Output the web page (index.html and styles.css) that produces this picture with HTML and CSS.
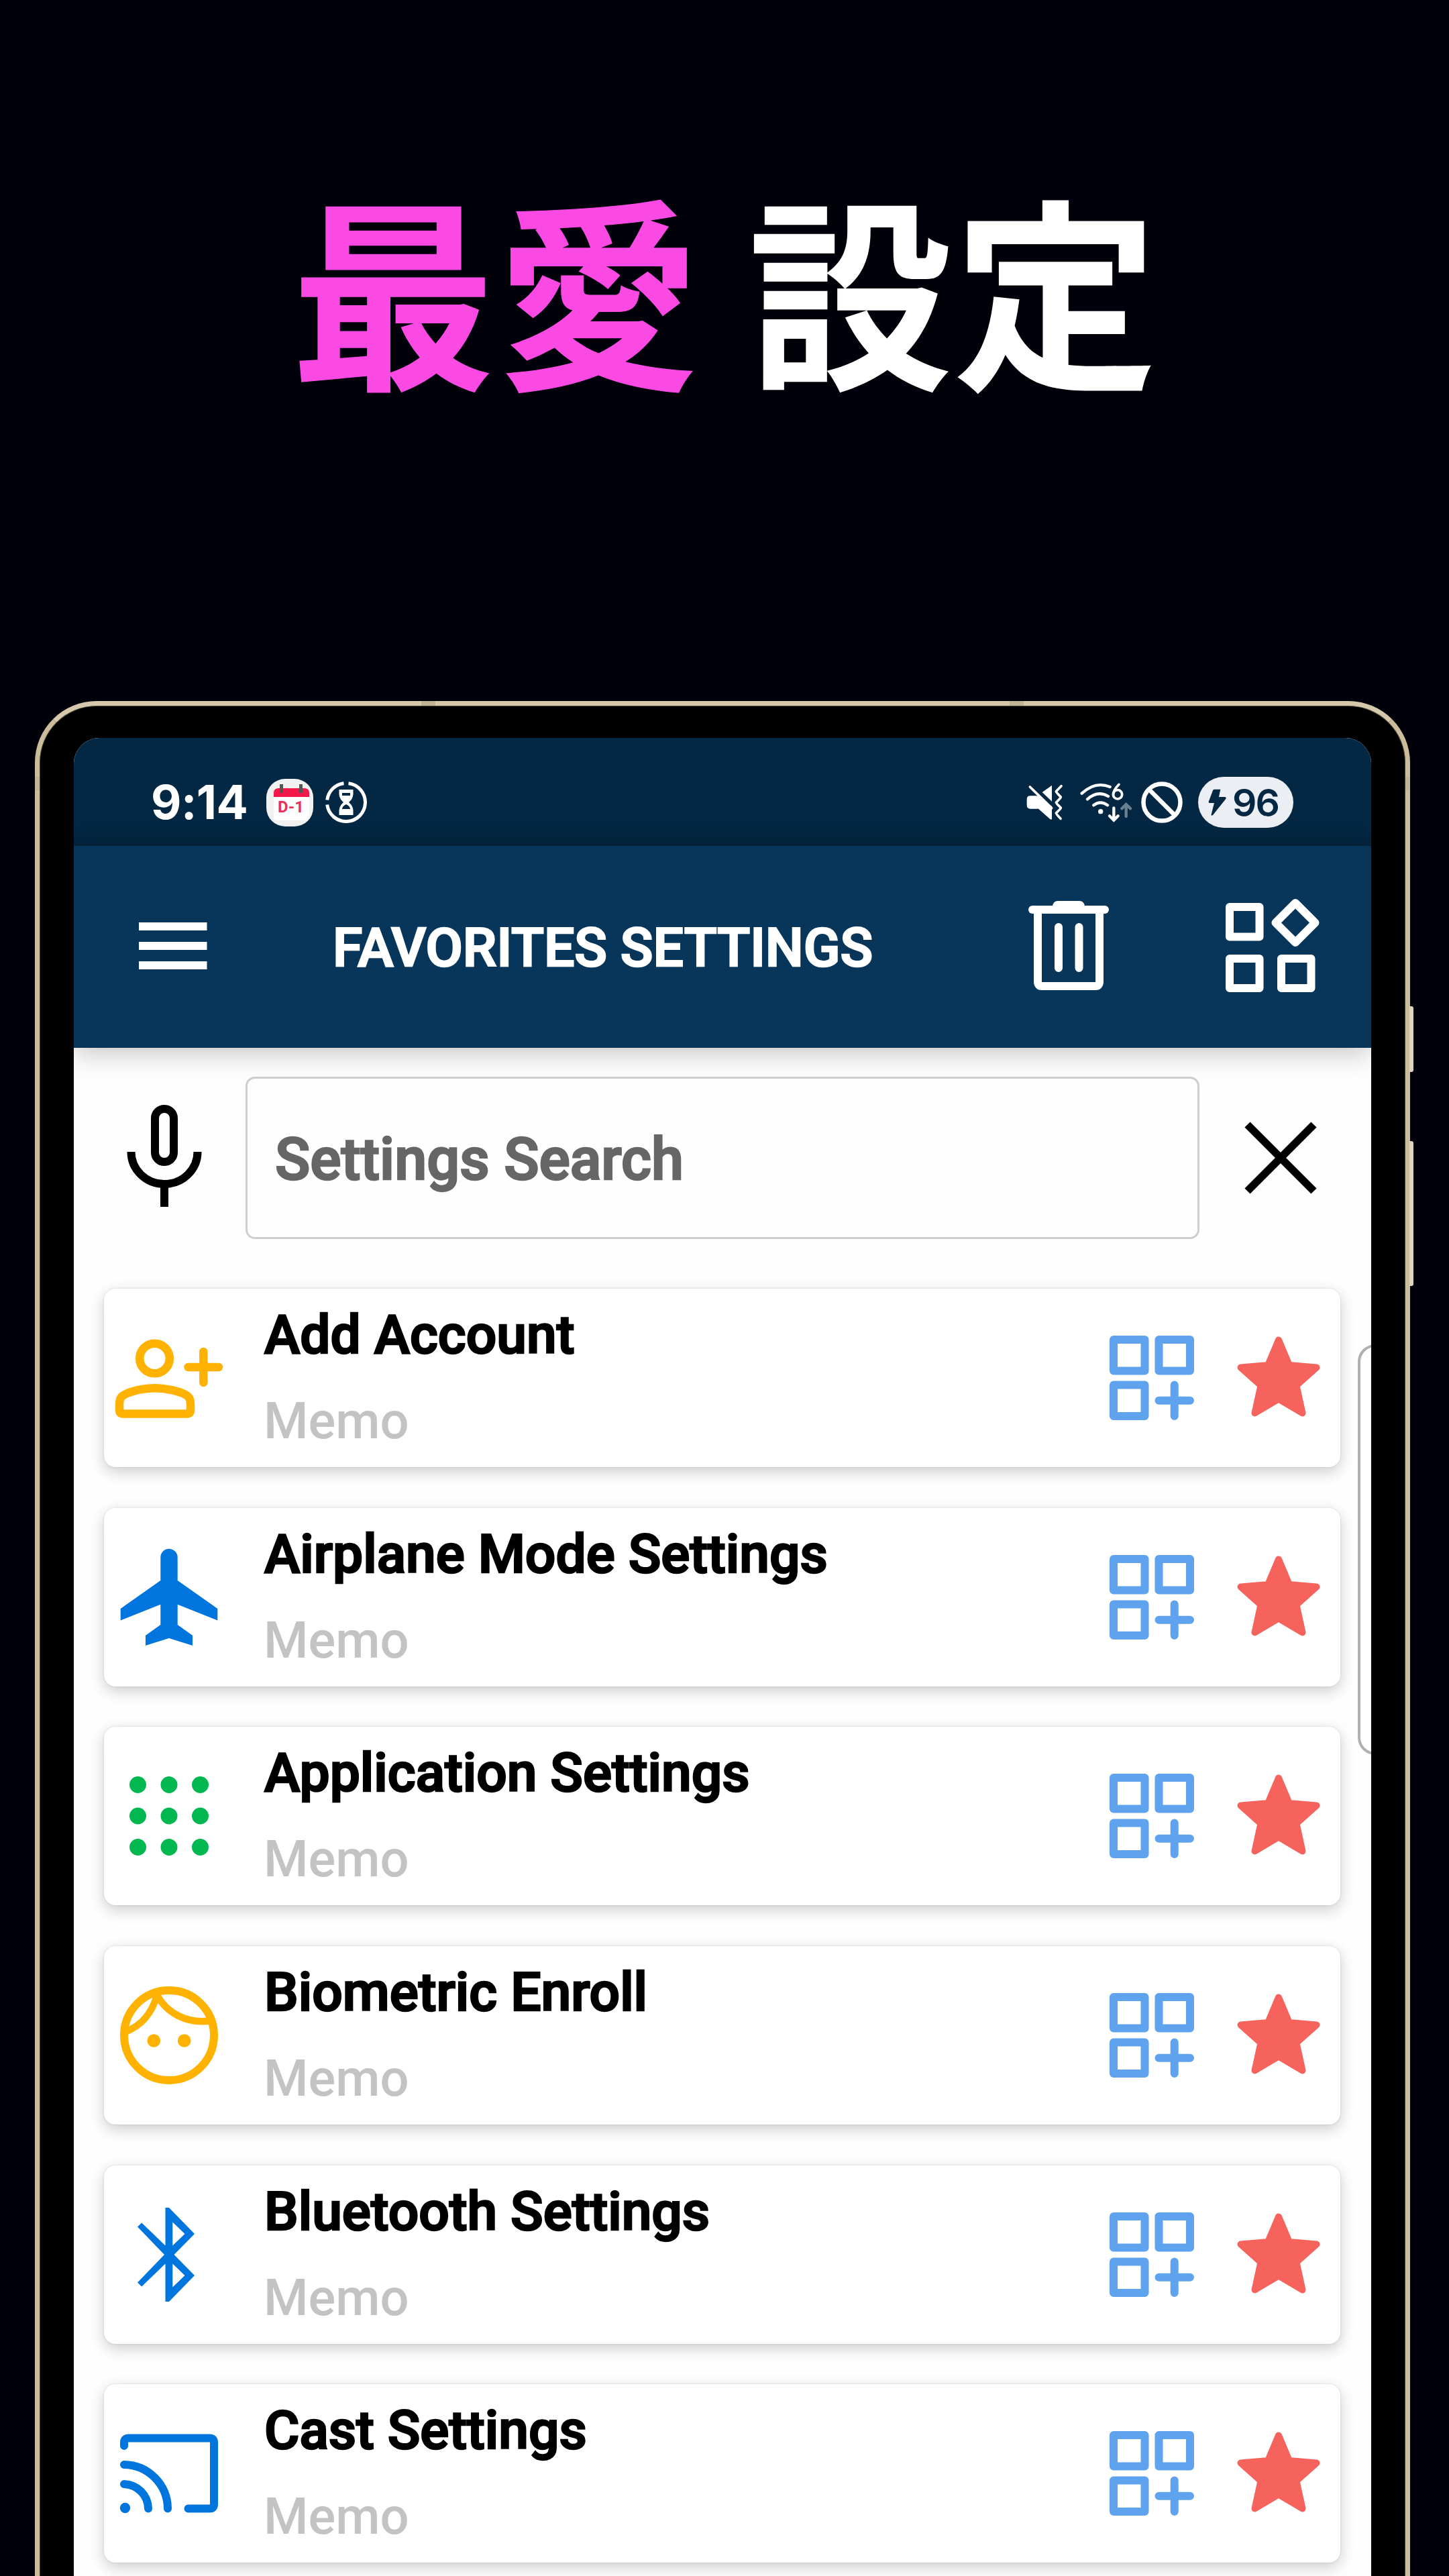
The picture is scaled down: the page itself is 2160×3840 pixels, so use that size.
FILE: index.html
```html
<!DOCTYPE html>
<html lang="ja">
    <head>
        <title>最愛 設定</title>
        <meta charset="utf-8">
        <link rel="stylesheet" href="styles.css">
    </head>
    <body>
        <!-- Shared icons -->
        <svg class="defs" width="0" height="0">
            <symbol id="widget" viewBox="0 0 126 126">
                <g fill="none" stroke="#5fa2ee" stroke-width="12" stroke-linejoin="round" stroke-linecap="round">
                    <rect x="6" y="6" width="46.5" height="46.5"/>
                    <rect x="73.5" y="6" width="46.5" height="46.5"/>
                    <rect x="6" y="73.5" width="46.5" height="46.5"/>
                    <path d="M73.5 96.7H120M96.7 73.5V120"/>
                </g>
            </symbol>
            <symbol id="star" viewBox="-62 -62 124 124">
                <path d="M0 -56.5L15.8 -19L56.5 -15.5L26.5 11.3L35.5 52.5L0 31.5L-35.5 52.5L-26.5 11.3L-56.5 -15.5L-15.8 -19Z" fill="#f5635c" stroke="#f5635c" stroke-width="10" stroke-linejoin="round"/>
            </symbol>
        </svg>

        <h1><span class="pink">最愛</span> 設定</h1>

        <div class="phone">
            <div class="antenna top_left"></div>
            <div class="antenna top_right"></div>
            <div class="antenna side_left"></div>
            <div class="antenna side_right"></div>
            <div class="key power"></div>
            <div class="key volume"></div>
            <div class="screen">
                <div class="status">
                    <span class="time">9:14</span>
                    <div class="calendar">
                        <svg class="cal_page" width="70" height="71" viewBox="0 0 70 71">
                            <rect x="11" y="14" width="53" height="48" rx="5" fill="#fff"/>
                            <path d="M11 27V21Q11 14 18 14H57Q64 14 64 21V27Z" fill="#f3184a"/>
                            <path d="M22.5 8V21M51.5 8V21" stroke="#555" stroke-width="5"/>
                        </svg>
                        <span class="dday">D-1</span>
                    </div>
                    <svg width="64" height="64" viewBox="-32 -32 64 64" fill="none" stroke="#fff" stroke-width="5">
                        <path d="M3.5 -28.3A28.5 28.5 0 1 1 -28.3 3.5"/>
                        <path d="M-28.3 -3.5A28.5 28.5 0 0 1 -3.5 -28.3"/>
                        <path d="M-10.5 -19H10.5V-12Q10 -5 4 0Q10 5 10.5 12V19H-10.5V12Q-10 5 -4 0Q-10 -5 -10.5 -12Z" fill="#fff" stroke="none"/>
                        <path d="M-6 -14H6V-10H-6ZM0 3Q6 6 6 10H-6Q-6 6 0 3Z" fill="#042843" stroke="none"/>
                    </svg>
                    <div class="right">
                        <svg class="mute" width="55" height="55" viewBox="90 115 165 165">
                            <path d="M106 127L203 222" stroke="#fff" stroke-width="11" stroke-linecap="round"/>
                            <path d="M204 120V192L161 151Z" fill="#fff"/>
                            <path d="M108 167H139L204 214V270Q202 276 195 270L144 225H108Q92 225 92 209V183Q92 167 108 167Z" fill="#fff"/>
                            <path d="M246 123L223 147Q223 151 244 172Q246 174 223 197Q223 201 244 220Q246 222 223 244Q223 248 243 269" fill="none" stroke="#fff" stroke-width="11" stroke-linecap="round" stroke-linejoin="round"/>
                        </svg>
                        <svg class="wifi" width="78" height="62" viewBox="330 105 234 186" fill="none" stroke="#fff" stroke-width="13" stroke-linecap="round">
                            <path d="M338 158Q398 102 464 129M363 184Q408 143 456 171M391 211Q421 188 453 211"/>
                            <circle cx="422" cy="239" r="11" fill="#fff" stroke="none"/>
                            <path d="M504 118Q478 145 479 163" stroke-width="11"/>
                            <circle cx="498" cy="163" r="20" stroke-width="11"/>
                            <path d="M481 223V276M462 259L481 278L500 259"/>
                            <path d="M536 261V208M517 226L536 207L555 226" stroke="#6b8091"/>
                        </svg>
                        <svg class="block" width="62" height="62" viewBox="-31 -31 62 62" fill="none" stroke="#fff" stroke-width="6.5">
                            <circle cx="0" cy="0" r="27.5"/>
                            <path d="M-19 -19L19 19"/>
                        </svg>
                        <div class="battery">
                            <svg width="27" height="40" viewBox="900 135 81 120" fill="#042843">
                                <path d="M927 137H955L948 171H976Q983 174 978 181L921 252Q912 257 914 249L927 198H905Q900 195 903 190L921 142Q923 137 927 137Z"/>
                            </svg>
                            <span>96</span>
                        </div>
                    </div>
                </div>

                <div class="appbar">
                    <svg class="menu" width="102" height="70" viewBox="0 0 102 70" fill="#fff">
                        <rect x="0" y="0" width="101.5" height="12"/>
                        <rect x="0" y="29" width="101.5" height="12"/>
                        <rect x="0" y="58" width="101.5" height="12"/>
                    </svg>
                    <h2>FAVORITES SETTINGS</h2>
                    <svg class="trash" width="120" height="134" viewBox="0 0 120 134" fill="none" stroke="#fff" stroke-width="12" stroke-linecap="round" stroke-linejoin="round">
                        <path d="M6 13H114"/>
                        <path d="M36 8Q37 0 44 0H76Q83 0 84 8Z" fill="#fff" stroke="none"/>
                        <path d="M14 14V120Q14 127 20 127H100Q106 127 106 120V14"/>
                        <path d="M45 39V100M75.5 39V100"/>
                    </svg>
                    <svg class="apps" width="142" height="142" viewBox="0 0 142 142" fill="none" stroke="#fff" stroke-width="12" stroke-linejoin="round">
                        <rect x="6" y="14" width="44.5" height="44.5"/>
                        <rect x="6" y="91" width="44.5" height="44"/>
                        <rect x="83" y="91" width="44.5" height="44"/>
                        <path d="M104 8L133.5 37.5L104 67L74.5 37.5Z"/>
                    </svg>
                </div>

                <div class="search">
                    <svg class="mic" width="112" height="152" viewBox="0 0 112 152" fill="none" stroke="#000" stroke-width="12">
                        <rect x="42" y="6" width="28" height="79" rx="14"/>
                        <path d="M6.5 70A49.5 48 0 0 0 105.5 70M56 118V152"/>
                    </svg>
                    <div class="field">Settings Search</div>
                    <svg class="close" width="108" height="108" viewBox="0 0 108 108" stroke="#000" stroke-width="11.5">
                        <path d="M4.5 4.5L103.5 103.5M103.5 4.5L4.5 103.5"/>
                    </svg>
                </div>

                <div class="list">
                    <div class="card">
                        <svg class="icon" viewBox="-86 -86 172 172" fill="none" stroke="#ffb300" stroke-width="12.5" stroke-linecap="round" stroke-linejoin="round">
                            <circle cx="-21.5" cy="-29" r="22.3"/>
                            <path d="M28.5 -16H74M51.3 -39V7"/>
                            <path d="M-74 39C-74 29 -70 26 -60 22C-34 13 -8 13 18 22C28 26 32 29 32 39V48Q32 53.5 27 53.5H-69Q-74 53.5 -74 48Z"/>
                        </svg>
                        <div class="text">
                            <div class="name">Add Account</div>
                            <div class="memo">Memo</div>
                        </div>
                        <svg class="add"><use href="#widget"/></svg>
                        <svg class="fav"><use href="#star"/></svg>
                    </div>
                    <div class="card">
                        <svg class="icon" viewBox="-86 -86 172 172" fill="#0075de">
                            <path d="M-12.7 -25V-59.5A12.7 12.7 0 0 1 12.7 -59.5V-25L72.3 17V34.5L12.7 10.8V41L35 57V72L0 61L-35 72V57L-12.7 41V10.8L-72.3 34.5V17Z"/>
                        </svg>
                        <div class="text">
                            <div class="name">Airplane Mode Settings</div>
                            <div class="memo">Memo</div>
                        </div>
                        <svg class="add"><use href="#widget"/></svg>
                        <svg class="fav"><use href="#star"/></svg>
                    </div>
                    <div class="card">
                        <svg class="icon" viewBox="-86 -86 172 172" fill="#00b84f">
                            <circle cx="-46.5" cy="-46.5" r="12.5"/><circle cx="0" cy="-46.5" r="12.5"/><circle cx="46.5" cy="-46.5" r="12.5"/>
                            <circle cx="-46.5" cy="0" r="12.5"/><circle cx="0" cy="0" r="12.5"/><circle cx="46.5" cy="0" r="12.5"/>
                            <circle cx="-46.5" cy="46.5" r="12.5"/><circle cx="0" cy="46.5" r="12.5"/><circle cx="46.5" cy="46.5" r="12.5"/>
                        </svg>
                        <div class="text">
                            <div class="name">Application Settings</div>
                            <div class="memo">Memo</div>
                        </div>
                        <svg class="add"><use href="#widget"/></svg>
                        <svg class="fav"><use href="#star"/></svg>
                    </div>
                    <div class="card">
                        <svg class="icon" viewBox="-86 -86 172 172" fill="none" stroke="#ffb300" stroke-width="12">
                            <circle cx="0" cy="0" r="67"/>
                            <path d="M-18 -60C-4 -34 26 -16 64 -22M-18 -60C-25 -34 -41 -14 -66 -5" stroke-width="10.5"/>
                            <circle cx="-22.7" cy="8" r="9.8" fill="#ffb300" stroke="none"/>
                            <circle cx="22.7" cy="8" r="9.8" fill="#ffb300" stroke="none"/>
                        </svg>
                        <div class="text">
                            <div class="name">Biometric Enroll</div>
                            <div class="memo">Memo</div>
                        </div>
                        <svg class="add"><use href="#widget"/></svg>
                        <svg class="fav"><use href="#star"/></svg>
                    </div>
                    <div class="card">
                        <svg class="icon" viewBox="-86 -86 172 172" fill="#0075de">
                            <path fill-rule="evenodd" d="M-5.5 -70H0L38 -31L7.5 0L38 31L0 70H-5.5V13.5L-40.8 47.5L-47 41.4L-7 0L-47 -41.4L-40.8 -47.5L-5.5 -13.5ZM5.3 -48.6V-13.5L23.5 -31ZM5.3 48.6V13.5L23.5 31Z"/>
                        </svg>
                        <div class="text">
                            <div class="name">Bluetooth Settings</div>
                            <div class="memo">Memo</div>
                        </div>
                        <svg class="add"><use href="#widget"/></svg>
                        <svg class="fav"><use href="#star"/></svg>
                    </div>
                    <div class="card">
                        <svg class="icon" viewBox="-86 -86 172 172" fill="none" stroke="#0075de" stroke-width="12" stroke-linecap="round" stroke-linejoin="round">
                            <path d="M-67 -41V-46Q-67 -52.5 -60 -52.5H61Q67 -52.5 67 -46V46Q67 52.5 61 52.5H28.5"/>
                            <path d="M-67 -13A66 66 0 0 1 -2 52.5M-67 16A37 37 0 0 1 -31 52.5"/>
                            <circle cx="-65.5" cy="51.5" r="7.7" fill="#0075de" stroke="none"/>
                        </svg>
                        <div class="text">
                            <div class="name">Cast Settings</div>
                            <div class="memo">Memo</div>
                        </div>
                        <svg class="add"><use href="#widget"/></svg>
                        <svg class="fav"><use href="#star"/></svg>
                    </div>
                </div>
                <div class="edge_handle"></div>
            </div>
        </div>
    </body>
</html>
```

FILE: styles.css
```css
*{
    box-sizing: border-box;
}
body{
    margin: 0;
    width: 2160px;
    height: 3840px;
    overflow: hidden;
    background-color: #00000a;
    font-family: Roboto, "Noto Sans CJK JP", sans-serif;
}
svg{
    display: block;
    flex: none;
}
.defs{
    position: absolute;
}
h1{
    margin: 0;
    height: 1045px;
    padding-top: 205px;
    text-align: center;
    font-family: "Noto Sans CJK JP", sans-serif;
    font-size: 306px;
    font-weight: 700;
    line-height: 440px;
    color: white;
    white-space: nowrap;
}
.pink{
    color: #fb4ae3;
}

/*Phone body*/
.phone{
    position: relative;
    width: 2050px;
    height: 2900px;
    margin-left: 52px;
    padding: 48px 51px 0;
    border: 7px solid #cbbd9b;
    border-top-color: #d5c8ab;
    border-radius: 92px;
    background-color: black;
    box-shadow: inset 0 0 0 1px #4a4435;
}
.antenna{
    position: absolute;
    background-color: #c0b496;
}
.top_left, .top_right{
    top: -7px;
    width: 21px;
    height: 7px;
}
.top_left{left: 569px;}
.top_right{right: 569px;}
.side_left, .side_right{
    top: 106px;
    width: 7px;
    height: 20px;
}
.side_left{left: -7px;}
.side_right{right: -7px;}
.key{
    position: absolute;
    right: -12px;
    width: 6px;
    background-color: #ddd4c0;
    border-radius: 0 3px 3px 0;
}
.power{top: 448px; height: 98px;}
.volume{top: 649px; height: 216px;}
.screen{
    position: relative;
    width: 1934px;
    height: 2800px;
    overflow: hidden;
    border-radius: 38px 38px 0 0;
    background-color: #fefefe;
}

/*Status bar*/
.status{
    display: flex;
    align-items: center;
    height: 161px;
    padding: 31px 116px 0 115px;
    background: linear-gradient(#042843 85%, #04243e);
}
.time{
    width: 172px;
    font-family: Inter, sans-serif;
    font-size: 70px;
    font-weight: 700;
    letter-spacing: -0.5px;
    line-height: 72px;
    color: white;
    white-space: nowrap;
}
.calendar{
    position: relative;
    width: 70px;
    height: 71px;
    margin-right: 17px;
    border-radius: 28px;
    background-color: #f1f1f1;
}
.dday{
    position: absolute;
    left: 0;
    top: 30px;
    width: 73px;
    text-align: center;
    font-size: 24px;
    font-weight: 700;
    line-height: 24px;
    color: #e8315a;
}
.right{
    display: flex;
    align-items: center;
    margin-left: auto;
}
.wifi{margin-left: 25px;}
.block{margin-left: 13px;}
.battery{
    display: flex;
    align-items: center;
    width: 142px;
    height: 76px;
    margin-left: 23px;
    padding-left: 15px;
    border-radius: 38px;
    background-color: #ebeff3;
}
.battery span{
    margin-left: 9px;
    font-family: Inter, sans-serif;
    font-size: 57px;
    font-weight: 600;
    letter-spacing: -2px;
    color: #042843;
}

/*App bar*/
.appbar{
    position: relative;
    display: flex;
    align-items: center;
    height: 301px;
    padding: 0 75px 4px 97px;
    background-color: #07365a;
    box-shadow: 0 6px 40px rgba(0, 0, 0, 0.25);
}
h2{
    margin: 6px 0 0 187px;
    font-size: 80.3px;
    font-weight: 500;
    line-height: 100px;
    color: white;
    white-space: nowrap;
    -webkit-text-stroke: 2.6px white;
}
.trash{margin-left: auto;}
.apps{
    margin-top: -2px;
    margin-left: 174px;
}

/*Search*/
.search{
    display: flex;
    align-items: center;
    height: 242px;
    margin-top: 43px;
    padding: 0 81px 0 79px;
}
.mic{margin-top: -7px;}
.field{
    width: 1422px;
    height: 242px;
    margin-left: 65px;
    padding-left: 41px;
    border: 3px solid #cecece;
    border-radius: 14px;
    font-size: 86.4px;
    font-weight: 500;
    line-height: 242px;
    color: #666;
    -webkit-text-stroke: 2.6px #666;
}
.close{margin-left: auto;}

/*List of settings*/
.list{
    display: flex;
    flex-direction: column;
    gap: 60.7px;
    padding: 74px 46px 0 45px;
}
.card{
    display: flex;
    align-items: center;
    flex: none;
    height: 266px;
    padding: 0 30px 0 11px;
    border-radius: 17px;
    background-color: white;
    box-shadow: 0 7px 22px rgba(0, 0, 0, 0.2), 0 0 3px rgba(0, 0, 0, 0.12);
}
.icon{
    width: 172px;
    height: 172px;
}
.text{
    flex: 1;
    height: 266px;
    padding: 19px 0 0 56px;
    white-space: nowrap;
}
.name{
    font-size: 80.3px;
    font-weight: 500;
    line-height: 100px;
    color: black;
    -webkit-text-stroke: 2.6px black;
}
.memo{
    margin-top: 28px;
    margin-left: -1px;
    font-size: 76px;
    font-weight: 500;
    line-height: 100px;
    color: #c3c3c3;
}
.add{
    width: 126px;
    height: 126px;
}
.fav{
    width: 124px;
    height: 124px;
    margin-left: 64px;
}
.edge_handle{
    position: absolute;
    left: 1914px;
    top: 904px;
    width: 60px;
    height: 612px;
    border: 4px solid #b0b0b0;
    border-radius: 26px;
    background-color: white;
}
```
